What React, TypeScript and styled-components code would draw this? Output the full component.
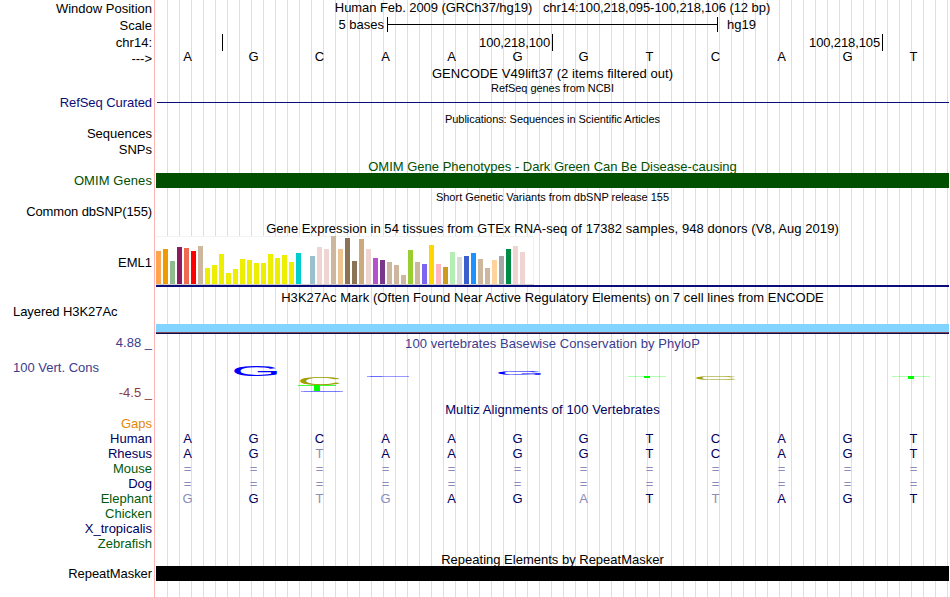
import { Fragment } from 'react'
import styled, { createGlobalStyle } from 'styled-components'

const GlobalStyle = createGlobalStyle`
  body {
    margin: 0;
    background: #fff;
  }
`

const Browser = styled.main`
  width: 949px;
  height: 597px;
  overflow: hidden;
  color: #000;
  font: 13px/15px 'Liberation Sans', Arial, sans-serif;
  white-space: pre;
  background:
    linear-gradient(#ffb4b4, #ffb4b4) 154px 0 / 1px 100% no-repeat,
    repeating-linear-gradient(90deg, #dcdcfa 0 1px, transparent 1px 12px) 167px
      0 / 782px 100% no-repeat;
`

const Row = styled.section<{ $h: number; $clip?: boolean }>`
  display: grid;
  grid-template-columns: 152px 793px;
  column-gap: 4px;
  height: ${({ $h }) => $h}px;
  overflow: ${({ $clip }) => ($clip ? 'hidden' : 'visible')};
`

const Label = styled.div<{ $top?: number; $color?: string; $ls?: number }>`
  padding-top: ${({ $top = 0 }) => $top}px;
  color: ${({ $color = '#000' }) => $color};
  letter-spacing: ${({ $ls = 0 }) => $ls}px;
  text-align: right;
`

const LeftLabel = styled(Label)`
  padding-left: 13px;
  text-align: left;
`

const Track = styled.div`
  min-width: 0;
`

const Title = styled.h2<{
  $top?: number
  $color?: string
  $small?: boolean
  $ls?: number
}>`
  margin: 0;
  padding-top: ${({ $top = 0 }) => $top}px;
  color: ${({ $color = '#000' }) => $color};
  font-size: ${({ $small }) => ($small ? 11 : 13)}px;
  line-height: ${({ $small }) => ($small ? 12 : 15)}px;
  font-weight: 400;
  letter-spacing: ${({ $ls = 0 }) => $ls}px;
  text-align: center;
`

const ScaleRow = styled.div`
  display: grid;
  grid-template-columns: 228px 331px auto;
  column-gap: 3px;
  height: 17px;
`

const ScaleText = styled.span<{ $end?: boolean }>`
  padding: 0 0 0 ${({ $end }) => ($end ? 0 : 6)}px;
  text-align: ${({ $end }) => ($end ? 'right' : 'left')};
`

const ScaleBar = styled.div`
  display: flex;
  align-items: center;
  height: 15px;
  border: solid #000;
  border-width: 0 1px;
  &::before {
    content: '';
    flex: 1;
    height: 1px;
    background: #000;
  }
`

const Ruler = styled.div`
  display: grid;
  grid-template-columns: 67px 330px 330px;
  height: 15px;
`

const Tick = styled.span`
  padding-right: 2px;
  border-right: 1px solid #000;
  line-height: 17px;
  letter-spacing: -0.12px;
  text-align: right;
`

const Bases = styled.div`
  display: grid;
  grid-template-columns: repeat(12, 66px);
`

const Base = styled.span<{ $color?: string }>`
  padding-right: 3px;
  color: ${({ $color = '#000' }) => $color};
  text-align: center;
`

const Bar = styled.div<{ $color: string; $h: number; $gap?: number }>`
  height: ${({ $h }) => $h}px;
  margin-top: ${({ $gap = 0 }) => $gap}px;
  background: ${({ $color }) => $color};
`

const GeneLine = styled(Bar)`
  margin-left: 1px;
`

const Expression = styled.div`
  display: flex;
  align-items: flex-end;
  gap: 2px;
  box-sizing: border-box;
  width: 378px;
  height: 49px;
  background: #fff;
  border-bottom: 1px solid #cfcfcf;
  box-shadow:
    inset 0 1px #f2f2f2,
    inset -1px 0 #f2f2f2;
`

const Tissue = styled.div<{ $h: number; $color: string }>`
  width: 5px;
  height: ${({ $h }) => $h}px;
  background: ${({ $color }) => $color};
`

const Logo = styled.svg`
  display: block;
`

const NAVY = '#00005f'
const GREEN = '#005a0a'
const PHYLO = '#3c3c8c'
const FADED = '#8c8cb9'

const TISSUES: [number, string][] = [
  [33, '#ffa54f'],
  [35, '#ee9a00'],
  [23, '#8fbc8f'],
  [37, '#8b1c62'],
  [36, '#ee6a50'],
  [33, '#ff0000'],
  [38, '#cdb79e'],
  [16, '#eeee00'],
  [19, '#eeee00'],
  [30, '#eeee00'],
  [11, '#eeee00'],
  [15, '#eeee00'],
  [25, '#eeee00'],
  [24, '#eeee00'],
  [21, '#eeee00'],
  [21, '#eeee00'],
  [30, '#eeee00'],
  [26, '#eeee00'],
  [29, '#eeee00'],
  [22, '#eeee00'],
  [31, '#00cdcd'],
  [0, '#ee82ee'],
  [28, '#9ac0cd'],
  [37, '#eed5d2'],
  [35, '#eed5d2'],
  [48, '#cdb79e'],
  [35, '#eec591'],
  [46, '#8b7355'],
  [23, '#8b7355'],
  [45, '#cdaa7d'],
  [35, '#eed5d2'],
  [26, '#b452cd'],
  [24, '#7a378b'],
  [22, '#cdb79e'],
  [19, '#cdb79e'],
  [9, '#cdb79e'],
  [34, '#9acd32'],
  [22, '#cdb79e'],
  [20, '#7a67ee'],
  [39, '#ffd700'],
  [20, '#ffb6c1'],
  [17, '#cd9b1d'],
  [32, '#b4eeb4'],
  [27, '#d9d9d9'],
  [28, '#3a5fcd'],
  [31, '#1e90ff'],
  [25, '#cdb79e'],
  [16, '#cdb79e'],
  [24, '#ffd39b'],
  [28, '#a6a6a6'],
  [35, '#008b45'],
  [38, '#eed5d2'],
  [32, '#eed5d2'],
  [0, '#ff00ff'],
]

const HUMAN = 'AGCAAGGTCAGT'

const SPECIES = [
  { name: 'Human', color: NAVY, seq: HUMAN },
  { name: 'Rhesus', color: NAVY, seq: 'AGTAAGGTCAGT' },
  { name: 'Mouse', color: GREEN, seq: '============' },
  { name: 'Dog', color: NAVY, seq: '============' },
  { name: 'Elephant', color: GREEN, seq: 'GGTGAGATTAGT' },
  { name: 'Chicken', color: GREEN, seq: '' },
  { name: 'X_tropicalis', color: NAVY, seq: '' },
  { name: 'Zebrafish', color: GREEN, seq: '' },
]

// Conservation letter, stretched so its ink fills the given height
const LogoLetter = ({
  char,
  x,
  bottom,
  h,
  color,
}: {
  char: string
  x: number
  bottom: number
  h: number
  color: string
}) => (
  <text
    transform={`translate(${x - 3} ${bottom}) scale(${char === 'C' ? 0.97 : 1} ${h / 48})`}
    fontSize="65"
    fill={color}
  >
    {char}
  </text>
)

const LogoT = ({ x, y, h }: { x: number; y: number; h: number }) => (
  <Fragment>
    <rect x={x} y={y} width="38" height="1" fill="#00ff00" opacity="0.3" />
    <rect x={x + 16} y={y} width="6" height={h} fill="#00ff00" />
  </Fragment>
)

const Conservation = () => (
  <Logo width="793" height="46" viewBox="0 1 793 46">
    <LogoLetter char="G" x={78} bottom={25.8} h={10.6} color="#0000ff" />
    <LogoLetter char="C" x={144} bottom={35} h={8.6} color="#a0a000" />
    <rect x="142" y="35" width="38" height="1" fill="#00ff00" opacity="0.75" />
    <rect x="158" y="35" width="6" height="6" fill="#00ff00" />
    <rect x="145" y="41" width="42" height="1" fill="#0000ff" opacity="0.4" />
    <rect x="148" y="41" width="36" height="1" fill="#0000ff" opacity="0.2" />
    <rect x="211" y="26" width="42" height="1" fill="#0000ff" opacity="0.4" />
    <rect x="214" y="26" width="12" height="1" fill="#0000ff" opacity="0.3" />
    <LogoLetter char="G" x={342} bottom={25} h={3.3} color="#0000ff" />
    <LogoT x={472} y={26} h={2} />
    <LogoLetter char="C" x={540} bottom={30} h={4.2} color="#a0a000" />
    <LogoT x={736} y={26} h={3} />
  </Logo>
)

const App = () => (
  <>
    <GlobalStyle />
    <Browser>
      <Row $h={17}>
        <Label $top={1}>Window Position</Label>
        <Title $ls={-0.07}>
          {'Human Feb. 2009 (GRCh37/hg19)   chr14:100,218,095-100,218,106 (12 bp)'}
        </Title>
      </Row>
      <Row $h={17}>
        <Label $top={1}>Scale</Label>
        <ScaleRow>
          <ScaleText $end>5 bases</ScaleText>
          <ScaleBar />
          <ScaleText>hg19</ScaleText>
        </ScaleRow>
      </Row>
      <Row $h={15}>
        <Label $top={1}>chr14:</Label>
        <Ruler>
          <Tick />
          <Tick>100,218,100</Tick>
          <Tick>100,218,105</Tick>
        </Ruler>
      </Row>
      <Row $h={17}>
        <Label $top={2}>{'--->'}</Label>
        <Bases>
          {HUMAN.split('').map((base, i) => (
            <Base key={i}>{base}</Base>
          ))}
        </Bases>
      </Row>
      <Row $h={16}>
        <Label />
        <Title $ls={0.07}>GENCODE V49lift37 (2 items filtered out)</Title>
      </Row>
      <Row $h={13}>
        <Label />
        <Title $small $ls={-0.06}>
          RefSeq genes from NCBI
        </Title>
      </Row>
      <Row $h={18}>
        <Label $color="#0c0c78" $ls={-0.07}>
          RefSeq Curated
        </Label>
        <Track>
          <GeneLine $color="#0c0c78" $h={1} $gap={7} />
        </Track>
      </Row>
      <Row $h={13}>
        <Label />
        <Title $small $ls={-0.06}>
          Publications: Sequences in Scientific Articles
        </Title>
      </Row>
      <Row $h={16}>
        <Label>Sequences</Label>
      </Row>
      <Row $h={17}>
        <Label>SNPs</Label>
      </Row>
      <Row $h={14} $clip>
        <Label />
        <Title $color="#005000">
          OMIM Gene Phenotypes - Dark Green Can Be Disease-causing
        </Title>
      </Row>
      <Row $h={15}>
        <Label $color="#005000" $ls={0.08}>
          OMIM Genes
        </Label>
        <Bar $color="#005000" $h={15} />
      </Row>
      <Row $h={16}>
        <Label />
        <Title $small $top={3}>
          Short Genetic Variants from dbSNP release 155
        </Title>
      </Row>
      <Row $h={17}>
        <Label $ls={-0.12}>Common dbSNP(155)</Label>
      </Row>
      <Row $h={15} $clip>
        <Label />
        <Title $ls={0.06}>
          Gene Expression in 54 tissues from GTEx RNA-seq of 17382 samples, 948
          donors (V8, Aug 2019)
        </Title>
      </Row>
      <Row $h={54}>
        <Label $top={19}>EML1</Label>
        <Track>
          <Expression>
            {TISSUES.map(([height, color], i) => (
              <Tissue key={i} $h={height} $color={color} />
            ))}
          </Expression>
          <Bar $color="#0c0c78" $h={2} />
        </Track>
      </Row>
      <Row $h={14}>
        <Label />
        <Title $ls={0.06}>
          H3K27Ac Mark (Often Found Near Active Regulatory Elements) on 7 cell
          lines from ENCODE
        </Title>
      </Row>
      <Row $h={31}>
        <LeftLabel $ls={-0.07}>Layered H3K27Ac</LeftLabel>
        <Track>
          <Bar $color="#80d4ff" $h={8} $gap={20} />
          <Bar $color="#82465a" $h={1} />
          <Bar $color="#0c0c50" $h={1} />
        </Track>
      </Row>
      <Row $h={67}>
        <div>
          <Label $color={PHYLO}>4.88 _</Label>
          <LeftLabel $top={10} $color={PHYLO}>
            100 Vert. Cons
          </LeftLabel>
          <Label $top={10} $color="#8c3c3c">
            -4.5 _
          </Label>
        </div>
        <Track>
          <Title $top={1} $color={PHYLO} $ls={0.06}>
            100 vertebrates Basewise Conservation by PhyloP
          </Title>
          <Conservation />
        </Track>
      </Row>
      <Row $h={14}>
        <Label />
        <Title $color={NAVY} $ls={0.1}>
          Multiz Alignments of 100 Vertebrates
        </Title>
      </Row>
      <Row $h={15}>
        <Label $color="#e6870a">Gaps</Label>
      </Row>
      {SPECIES.map(({ name, color, seq }) => (
        <Row key={name} $h={15}>
          <Label $color={color}>{name}</Label>
          <Bases>
            {seq.split('').map((base, i) => (
              <Base key={i} $color={base === HUMAN[i] ? NAVY : FADED}>
                {base}
              </Base>
            ))}
          </Bases>
        </Row>
      ))}
      <Row $h={15} $clip>
        <Label />
        <Title $top={1}>Repeating Elements by RepeatMasker</Title>
      </Row>
      <Row $h={31}>
        <Label $ls={-0.07}>RepeatMasker</Label>
        <Bar $color="#000" $h={15} />
      </Row>
    </Browser>
  </>
)

export default App
